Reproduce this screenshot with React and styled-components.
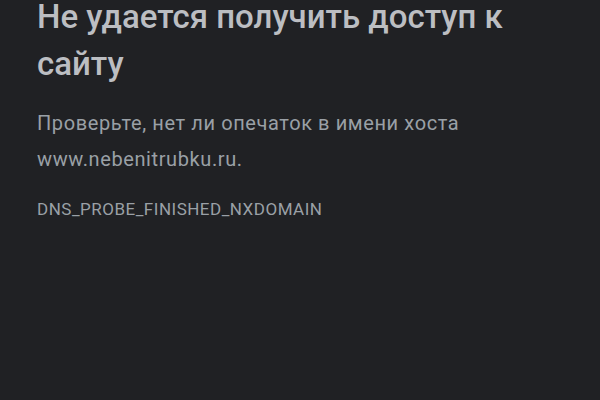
import React from 'react';
import styled, { createGlobalStyle } from 'styled-components';

const GlobalStyle = createGlobalStyle`
    html, body {
        margin: 0;
        padding: 0;
        background-color: #202124;
    }
`
const Page = styled.main`
    width: 600px;
    height: 400px;
    box-sizing: border-box;
    padding: 0 24px 0 37px;
    background-color: #202124;
    font-family: Roboto, 'Noto Sans', sans-serif;
    overflow: hidden;
`
const Title = styled.h1`
    margin: -7px 0 0 0;
    font-size: 33px;
    line-height: 47px;
    font-weight: 500;
    color: #bcbec2;
`
const Message = styled.p`
    margin: 18px 0 0 0;
    font-size: 20px;
    line-height: 36px;
    letter-spacing: 0.6px;
    color: #9aa0a6;
`
const ErrorCode = styled.div`
    margin-top: 22px;
    font-size: 17px;
    line-height: 20px;
    letter-spacing: 0.5px;
    color: #9aa0a6;
`

function App() {
    return (
        <>
            <GlobalStyle />
            <Page>
                <Title>Не удается получить доступ к сайту</Title>
                <Message>Проверьте, нет ли опечаток в имени хоста www.nebenitrubku.ru.</Message>
                <ErrorCode>DNS_PROBE_FINISHED_NXDOMAIN</ErrorCode>
            </Page>
        </>
    )
}

export default App;
